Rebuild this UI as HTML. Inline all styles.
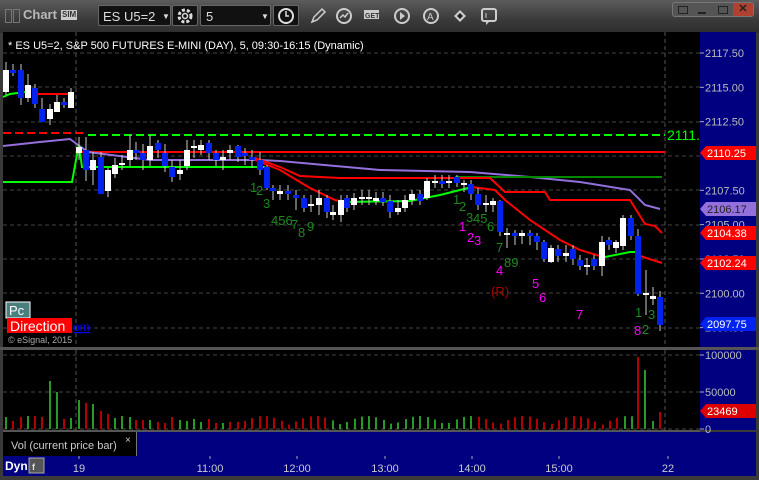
<!DOCTYPE html>
<html><head><meta charset="utf-8"><style>
*{margin:0;padding:0}
body{width:759px;height:480px;background:#3a3a3a;overflow:hidden;position:relative;font-family:"Liberation Sans",sans-serif}
.abs{position:absolute}
</style></head><body>
<div class="abs" style="left:0;top:0;width:759px;height:33px;background:linear-gradient(#5c5c5c,#3a3a3a 60%,#2e2e2e)"></div>
<div class="abs" style="left:5px;top:9px;width:5px;height:12px;border:1px solid #777"></div>
<div class="abs" style="left:13px;top:9px;width:5px;height:12px;border:1px solid #777"></div>
<div class="abs" style="left:23px;top:7px;color:#b8b8b8;font-size:13px;font-weight:bold">Chart</div>
<div class="abs" style="left:61px;top:10px;background:#ccc;color:#333;font-size:8px;font-weight:bold;padding:0 1px;line-height:10px">SIM</div>
<div class="abs" style="left:98px;top:5px;width:73px;height:21px;background:#111;border:1px solid #666;border-radius:2px;color:#ddd;font-size:13px;line-height:21px;padding-left:4px;box-sizing:border-box">ES U5=2 <span style="position:absolute;left:63px;font-size:8px">▼</span></div>
<div class="abs" style="left:172px;top:5px;width:26px;height:21px;background:#111;border:1px solid #666;border-radius:2px;box-sizing:border-box"><svg width="24" height="20"><circle cx="12" cy="10" r="6" fill="none" stroke="#ddd" stroke-width="3" stroke-dasharray="3 2"/><circle cx="12" cy="10" r="2.5" fill="none" stroke="#ddd" stroke-width="1.5"/></svg></div>
<div class="abs" style="left:200px;top:5px;width:71px;height:21px;background:#111;border:1px solid #666;border-radius:2px;color:#ddd;font-size:13px;line-height:21px;padding-left:5px;box-sizing:border-box">5<span style="position:absolute;left:60px;font-size:8px">▼</span></div>
<div class="abs" style="left:273px;top:5px;width:26px;height:21px;background:#111;border:1px solid #666;border-radius:2px;box-sizing:border-box"><svg width="24" height="20"><circle cx="12" cy="10" r="7" fill="none" stroke="#ddd" stroke-width="2"/><path d="M12 5v5h3" stroke="#ddd" stroke-width="1.5" fill="none"/></svg></div>
<svg class="abs" style="left:300px;top:4px" width="210" height="24">
<path d="M12 18l2-5 8-8 3 3-8 8z" fill="none" stroke="#ccc" stroke-width="1.5"/>
<circle cx="44" cy="12" r="7" fill="none" stroke="#ccc" stroke-width="2"/><path d="M40 14l3-3 2 2 3-4" stroke="#ccc" fill="none" stroke-width="1.5"/>
<rect x="64" y="6" width="15" height="9" fill="#ccc"/><text x="65" y="14" font-size="7" fill="#333" font-weight="bold" font-family="Liberation Sans">GET</text>
<circle cx="102" cy="12" r="7" fill="none" stroke="#ccc" stroke-width="2"/><path d="M100 8v8l5-4z" fill="#ccc"/>
<circle cx="131" cy="12" r="7" fill="none" stroke="#ccc" stroke-width="2"/><text x="127" y="16" font-size="10" fill="#ccc" font-family="Liberation Sans">A</text>
<path d="M154 12l6-6 6 6-6 6z" fill="#ccc"/><path d="M157 12l3-3 3 3-3 3z" fill="#222"/>
<rect x="182" y="5" width="14" height="12" rx="2" fill="none" stroke="#ccc" stroke-width="2"/><path d="M186 17v4l4-4" fill="#ccc"/><path d="M186 9v5" stroke="#ccc"/>
</svg>
<div class="abs" style="left:672px;top:2px;width:80px;height:13px;border:1px solid #777;border-radius:3px;background:#555;overflow:hidden">
<div class="abs" style="left:60px;top:0;width:20px;height:13px;background:#b04030;color:#222;font-size:11px;font-weight:bold;text-align:center;line-height:13px">✕</div>
<div class="abs" style="left:45px;top:3px;width:8px;height:6px;border:1px solid #222"></div>
<div class="abs" style="left:25px;top:9px;width:8px;height:2px;background:#222"></div>
<div class="abs" style="left:5px;top:3px;width:8px;height:6px;border:1px solid #222"></div>
</div>
<svg class="abs" style="left:0;top:0" width="759" height="480" id="s" font-family="Liberation Sans">
<rect x="3" y="32" width="697" height="315" fill="#000"/>
<rect x="700" y="32" width="56" height="315" fill="#000080"/>
<rect x="0" y="347" width="759" height="3" fill="#555"/>
<rect x="3" y="350" width="697" height="80" fill="#000"/>
<rect x="700" y="350" width="56" height="80" fill="#000080"/>
<rect x="3" y="430" width="697" height="2" fill="#555"/>
<rect x="3" y="432" width="133" height="24" fill="#000"/>
<rect x="136" y="432" width="564" height="24" fill="#000080"/>
<rect x="700" y="432" width="56" height="24" fill="#000080"/>
<rect x="3" y="456" width="753" height="20" fill="#000080"/>
<rect x="136" y="432" width="1" height="24" fill="#777"/>
<g id="g"></g>
</svg>
<script>
const g=document.getElementById('g');let h='';
const Y=p=>53+(2117.5-p)*13.73;
for(let p=2117.5;p>2096;p-=2.5){const y=Y(p).toFixed(0);h+=`<line x1="3" y1="${y}" x2="700" y2="${y}" stroke="#444" stroke-dasharray="4 3"/>`;}
[392,355,429].forEach(y=>h+=`<line x1="3" y1="${y}" x2="700" y2="${y}" stroke="#444" stroke-dasharray="4 3"/>`);
[76,665].forEach(x=>{h+=`<line x1="${x}" y1="32" x2="${x}" y2="347" stroke="#555" stroke-dasharray="4 3"/><line x1="${x}" y1="350" x2="${x}" y2="430" stroke="#555" stroke-dasharray="4 3"/>`});
h+=`<text x="8" y="49" fill="#fff" font-size="11">* ES U5=2, S&amp;P 500 FUTURES E-MINI (DAY), 5, 09:30-16:15 (Dynamic)</text>`;
const L=(pts,c,w,d)=>h+=`<polyline points="${pts}" fill="none" stroke="${c}" stroke-width="${w||2}" ${d?'stroke-dasharray="'+d+'"':''}/>`;
L("3,133 87,133","#f00",2,"8 4");
L("88,135 665,135","#0f0",2,"8 4");
L("80,152 665,152","#f00",2);
L("3,146 40,142 70,139 78,145 88,152 150,160 260,160 280,161 380,170 470,172 530,177 580,182 630,190 645,205 660,209","#9370db",2);
L("455,177 662,177","#080",2);
L("3,182 72,182 76,160 79,145 82,167 265,167","#0f0",2);
L("3,97 10,94 25,92","#0f0",2);L("35,94 72,94","#f00",2);
L("255,158 280,167 300,176 340,178 490,178 505,192 545,192 550,200 630,200 645,224 655,226 662,233","#f00",2);
L("255,160 280,170 310,188 335,200 345,202","#f00",2);
L("345,202 410,201 440,195 460,190 472,187","#0f0",2);
L("472,187 495,190 505,200 530,220 560,240 580,250 600,256","#f00",2);
L("600,258 630,252 637,252","#0f0",2);L("637,255 662,263","#f00",2);
const C=[[6,70,92,'w',62,95],[13,70,73,'b',64,76],[21,70,98,'b',64,105],[28,85,98,'w',74,102],[35,88,104,'b',84,108],[42,109,122,'b',98,122],[50,109,119,'w',104,125],[57,102,112,'w',95,112],[64,102,105,'b',98,108],[71,92,108,'w',88,108],
[79,147,153,'w',137,160],[86,150,170,'b',137,181],[93,160,170,'w',152,185],[101,157,194,'b',152,194],[108,170,191,'w',168,197],[115,165,174,'w',158,178],[122,163,165,'w',155,170],[130,150,160,'w',135,166],[136,150,153,'b',142,160],[143,153,160,'b',144,170],[150,146,160,'w',135,166],[158,143,150,'b',140,158],[165,153,166,'b',144,172],[172,167,177,'b',160,182],[180,170,174,'w',160,180],[187,150,166,'w',140,170],[194,146,148,'w',140,158],[201,145,150,'w',140,155],[209,143,153,'b',140,160],[216,153,160,'b',150,166],[223,157,160,'w',150,170],[230,150,153,'w',145,160],[238,146,157,'b',145,162],[245,153,156,'b',148,165],[252,157,160,'b',150,168],[260,160,170,'b',152,175],[267,167,188,'b',165,190],[273,188,191,'b',185,200],[280,191,194,'w',185,200],[288,191,194,'b',185,200],[296,195,198,'b',190,210],
[304,198,208,'b',195,212],[311,204,206,'w',195,212],[319,198,205,'w',190,215],[327,198,212,'b',195,218],[333,212,215,'w',205,220],[341,200,215,'w',195,222],[347,198,208,'b',195,212],[354,198,205,'w',193,210],[362,197,199,'w',190,205],[369,197,199,'w',190,205],[376,198,201,'w',192,205],[383,198,202,'b',192,206],[390,201,212,'b',195,218],[398,208,212,'w',200,215],[405,200,208,'w',195,212],[412,194,200,'w',190,205],[420,194,201,'b',190,205],[427,181,198,'w',178,200],[435,181,183,'w',175,188],[442,181,184,'b',175,188],[449,181,183,'w',175,188],[457,177,183,'b',175,187],[464,183,185,'w',180,192],[471,184,194,'b',180,200],[478,194,205,'b',188,210],[486,203,205,'w',195,212],[493,201,205,'w',198,212],[500,201,232,'b',200,236],
[507,233,234,'w',228,248],[515,233,236,'b',230,245],[522,233,236,'w',230,244],[530,233,236,'b',230,245],[537,236,242,'b',233,250],[544,242,259,'b',240,262],[551,248,262,'w',245,263],[558,249,256,'b',245,262],[566,253,256,'w',245,262],[573,249,259,'b',245,265],[580,260,266,'b',255,270],[587,265,267,'w',258,275],[594,259,266,'b',255,270],[602,242,266,'w',236,276],[609,240,245,'b',237,250],[616,242,248,'w',240,253],[623,218,246,'w',215,250],[631,218,236,'b',215,240],[638,236,294,'b',229,296],[646,293,294,'w',270,315],[653,296,299,'w',287,305],[660,297,325,'b',291,331]];
C.forEach(c=>{const col=c[3]=='w'?'#fff':'#0022ee';h+=`<line x1="${c[0]}" y1="${c[4]}" x2="${c[0]}" y2="${c[5]}" stroke="#ccc"/><rect x="${c[0]-3}" y="${c[1]}" width="6" height="${Math.max(2,c[2]-c[1])}" fill="${col}"/>`;});
const V=[[6,12,'g'],[13,8,'r'],[21,12,'r'],[28,13,'g'],[35,13,'r'],[42,12,'r'],[50,48,'g'],[57,37,'g'],[64,10,'r'],[71,11,'g'],[79,29,'g'],[86,26,'r'],[93,25,'g'],[101,18,'r'],[108,15,'r'],[115,11,'g'],[122,13,'g'],[130,12,'g'],[136,9,'r'],[143,9,'r'],[150,9,'g'],[158,7,'r'],[165,6,'r'],[172,12,'r'],[180,9,'g'],[187,8,'g'],[194,10,'g'],[201,7,'g'],[209,10,'r'],[216,6,'r'],[223,6,'g'],[230,7,'r'],[238,7,'r']];
for(let x=245;x<635;x+=7.3){const r=Math.sin(x*1.7)>0;V.push([Math.round(x),4+Math.abs(Math.sin(x*0.37))*9,r?'r':'g']);}
V.push([638,72,'r'],[645,59,'g'],[653,8,'g'],[660,17,'r']);
V.forEach(v=>h+=`<line x1="${v[0]}" y1="429" x2="${v[0]}" y2="${429-v[1]}" stroke="${v[2]=='r'?'#e00':'#3c3'}" stroke-width="1.5"/>`);
const T=(x,y,t,c)=>h+=`<text x="${x}" y="${y}" fill="${c}" font-size="13">${t}</text>`;
const dg='#1e8a1e',mg='#f0f';
T(250,192,'1',dg);T(256,195,'2',dg);T(263,208,'3',dg);T(271,225,'456',dg);T(291,229,'7',dg);T(298,237,'8',dg);T(307,231,'9',dg);
T(453,204,'1',dg);T(459,211,'2',dg);T(466,222,'3',dg);T(473,223,'45',dg);T(487,231,'6',dg);T(496,252,'7',dg);T(504,267,'89',dg);
T(459,231,'1',mg);T(467,242,'2',mg);T(474,245,'3',mg);T(496,275,'4',mg);T(532,288,'5',mg);T(539,302,'6',mg);T(576,319,'7',mg);T(634,335,'8',mg);
T(491,296,'(R)','#a00');T(635,317,'1',dg);T(642,334,'2',dg);T(648,319,'3',dg);
h+=`<text x="667" y="140" fill="#0f0" font-size="14">2111.</text>`;
[[2117.5,'2117.50'],[2115,'2115.00'],[2112.5,'2112.50'],[2107.5,'2107.50'],[2105,'2105.00'],[2102.5,'2102.50'],[2100,'2100.00'],[2097.5,'2097.50']].forEach(p=>{const y=Y(p[0]);h+=`<line x1="700" y1="${y}" x2="704" y2="${y}" stroke="#aaa"/><text x="705" y="${y+4}" fill="#bbb" font-size="11">${p[1]}</text>`});
const lab=(y,t,bg,fc)=>h+=`<polygon points="700,${y} 706,${y-7} 756,${y-7} 756,${y+7} 706,${y+7}" fill="${bg}"/><text x="707" y="${y+4}" fill="${fc}" font-size="11">${t}</text>`;
lab(153,'2110.25','#f00','#fff');lab(209,'2106.17','#9370db','#222');lab(233,'2104.38','#f00','#fff');lab(263,'2102.24','#f00','#fff');lab(324,'2097.75','#0022ee','#fff');
[[355,'100000'],[392,'50000'],[429,'0']].forEach(p=>h+=`<line x1="700" y1="${p[0]}" x2="704" y2="${p[0]}" stroke="#aaa"/><text x="705" y="${p[0]+4}" fill="#bbb" font-size="11">${p[1]}</text>`);
lab(411,'23469','#d00','#fff');
h+=`<rect x="6" y="302" width="24" height="16" fill="#4a7f7f" stroke="#fff"/><text x="9" y="315" fill="#fff" font-size="13">Pc</text>`;
h+=`<rect x="7" y="318" width="65" height="15" fill="#f00"/><text x="10" y="331" fill="#fff" font-size="14">Direction</text><text x="73" y="331" fill="#00f" font-size="12" text-decoration="underline">om</text>`;
h+=`<text x="8" y="343" fill="#aaa" font-size="9">© eSignal, 2015</text>`;
h+=`<text x="11" y="449" fill="#ccc" font-size="11">Vol (current price bar)</text><text x="125" y="443" fill="#ccc" font-size="10">×</text>`;
h+=`<text x="5" y="470" fill="#fff" font-size="12" font-weight="bold">Dyn</text><rect x="29" y="458" width="15" height="15" fill="#555" stroke="#aaa"/><text x="32" y="470" fill="#ddd" font-size="9" font-weight="bold">f</text>`;
[[79,'19'],[210,'11:00'],[297,'12:00'],[385,'13:00'],[472,'14:00'],[559,'15:00'],[668,'22']].forEach(t=>h+=`<line x1="${t[0]}" y1="456" x2="${t[0]}" y2="459" stroke="#aaa"/><text x="${t[0]}" y="472" fill="#ccc" font-size="11" text-anchor="middle">${t[1]}</text>`);
g.innerHTML=h;
</script>
</body></html>
